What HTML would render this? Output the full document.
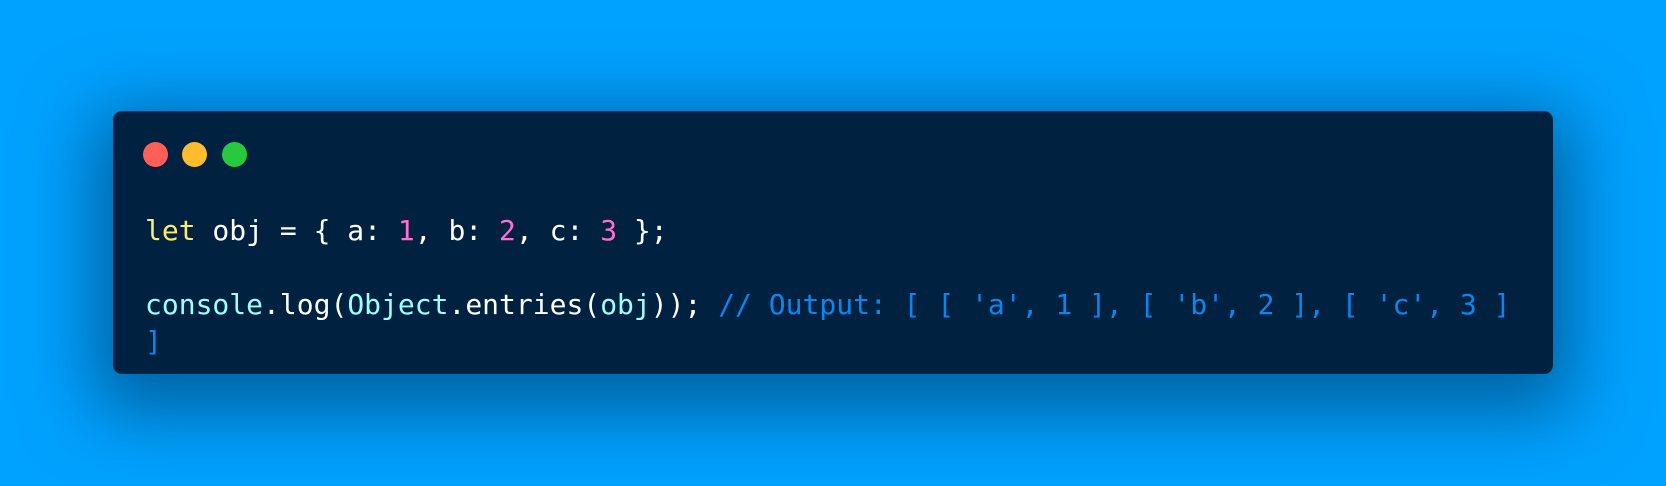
<!DOCTYPE html>
<html><head><style>
html,body{margin:0;padding:0}
body{width:1666px;height:486px;background:#00a2ff;position:relative;overflow:hidden;font-family:"DejaVu Sans Mono","Liberation Mono",monospace}
.card{position:absolute;left:113px;top:111px;width:1440px;height:263px;background:#002240;border-radius:9px;box-shadow:0 20px 70px 20px rgba(0,50,90,0.55)}
.dot{position:absolute;top:142px;width:25px;height:25px;border-radius:50%}
.code{position:absolute;left:145px;top:212px;width:1380px;font-size:28px;line-height:37px;color:#fff;white-space:pre-wrap;word-break:normal}
.k{color:#fbe978}.n{color:#ff6fd2}.c{color:#9effff}.cm{color:#0a86f0}
</style></head><body>
<div class="card"></div>
<div class="dot" style="left:143px;background:#ff5f56"></div>
<div class="dot" style="left:182px;background:#ffbd2e"></div>
<div class="dot" style="left:222px;background:#27c93f"></div>
<div class="code"><span class="k">let</span> obj = { a: <span class="n">1</span>, b: <span class="n">2</span>, c: <span class="n">3</span> };

<span class="c">console</span>.log(<span class="c">Object</span>.entries(<span class="c">obj</span>)); <span class="cm">// Output: [ [ 'a', 1 ], [ 'b', 2 ], [ 'c', 3 ]
]</span></div>
</body></html>
